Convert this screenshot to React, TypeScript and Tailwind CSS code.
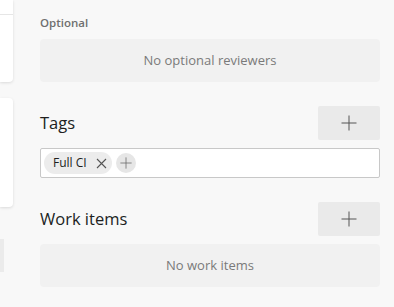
import { useState } from 'react'

function PlusIcon({ size = 16, className = '' }: { size?: number; className?: string }) {
  return (
    <svg width={size} height={size} viewBox="0 0 16 16" className={className}>
      <path d="M8 0.5v15M0.5 8h15" stroke="currentColor" strokeWidth="1" fill="none" />
    </svg>
  )
}

function CloseIcon() {
  return (
    <svg width="11" height="11" viewBox="0 0 11 11">
      <path d="M1 1l9 9M10 1l-9 9" stroke="currentColor" strokeWidth="1.1" fill="none" />
    </svg>
  )
}

export default function App() {
  const [tags] = useState(['Full CI'])

  return (
    <div
      className="flex w-[394px] h-[307px] overflow-hidden bg-[#f8f8f8] text-[#201f1e]"
      style={{ fontFamily: '"Open Sans", "Noto Sans", sans-serif' }}
    >
      {/* 왼쪽 카드 가장자리 */}
      <div className="flex flex-col w-[13px] shrink-0">
        <div className="h-[82px] bg-white rounded-br-[4px] shadow-[0_1px_3px_rgba(0,0,0,0.12)] pt-[14px]">
          <div className="h-px bg-[#e6e6e6]" />
        </div>
        <div className="mt-[16px] h-[109px] bg-white rounded-r-[4px] shadow-[0_1px_3px_rgba(0,0,0,0.12)]" />
        <div className="mt-[32px] h-[33px] w-[4px] bg-[#ebebeb]" />
      </div>

      <div className="flex-1 pl-[27px] pr-[14px]">
        <div className="pt-[15px] text-[11.5px] font-semibold text-[#6f6f6f] leading-[16px]">
          Optional
        </div>
        <div className="mt-[8px] h-[43px] rounded-[4px] bg-[#f1f1f1] flex items-center justify-center text-[13px] text-[#7a7a7a]">
          No optional reviewers
        </div>

        <div className="mt-[24px] h-[34px] flex items-center justify-between">
          <span className="text-[16.5px] leading-none">Tags</span>
          <button className="w-[62px] h-[34px] rounded-[2px] bg-[#eaeaea] flex items-center justify-center text-[#555]">
            <PlusIcon />
          </button>
        </div>

        <div className="mt-[8px] h-[30px] bg-white border border-[#c8c8c8] rounded-[2px] flex items-center gap-[4px] px-[3px]">
          {tags.map((tag) => (
            <span
              key={tag}
              className="h-[22px] pl-[9px] pr-[5px] rounded-full bg-[#ececec] flex items-center gap-[9px] text-[12px]"
            >
              {tag}
              <span className="text-[#555] flex items-center">
                <CloseIcon />
              </span>
            </span>
          ))}
          <span className="w-[20px] h-[20px] rounded-full bg-[#e6e6e6] flex items-center justify-center text-[#666]">
            <PlusIcon size={12} />
          </span>
        </div>

        <div className="mt-[24px] h-[34px] flex items-center justify-between">
          <span className="text-[16.5px] leading-none">Work items</span>
          <button className="w-[62px] h-[34px] rounded-[2px] bg-[#eaeaea] flex items-center justify-center text-[#555]">
            <PlusIcon />
          </button>
        </div>
        <div className="mt-[8px] h-[43px] rounded-[4px] bg-[#f1f1f1] flex items-center justify-center text-[13px] text-[#7a7a7a]">
          No work items
        </div>
      </div>
    </div>
  )
}
